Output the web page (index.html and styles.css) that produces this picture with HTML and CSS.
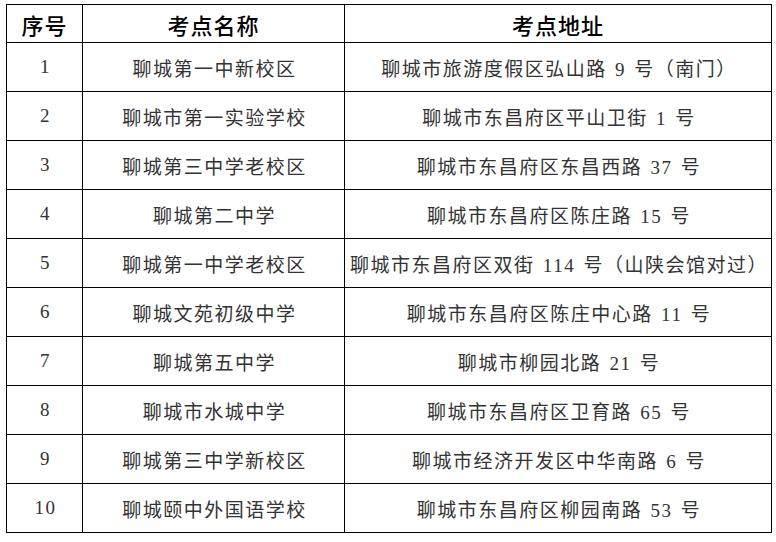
FILE: index.html
```html
<!DOCTYPE html>
<html lang="zh">
<head>
<meta charset="utf-8">
<title>考点名称</title>
<link rel="stylesheet" href="styles.css">
</head>
<body>
<div class="page">
<table class="exam">
<colgroup><col class="c-no"><col class="c-name"><col class="c-addr"></colgroup>
<thead>
<tr><th>序号</th><th>考点名称</th><th>考点地址</th></tr>
</thead>
<tbody>
<tr><td>1</td><td>聊城第一中新校区</td><td>聊城市旅游度假区弘山路 9 号（南门）</td></tr>
<tr><td>2</td><td>聊城市第一实验学校</td><td>聊城市东昌府区平山卫街 1 号</td></tr>
<tr><td>3</td><td>聊城第三中学老校区</td><td>聊城市东昌府区东昌西路 37 号</td></tr>
<tr><td>4</td><td>聊城第二中学</td><td>聊城市东昌府区陈庄路 15 号</td></tr>
<tr><td>5</td><td>聊城第一中学老校区</td><td>聊城市东昌府区双街 114 号（山陕会馆对过）</td></tr>
<tr><td>6</td><td>聊城文苑初级中学</td><td>聊城市东昌府区陈庄中心路 11 号</td></tr>
<tr><td>7</td><td>聊城第五中学</td><td>聊城市柳园北路 21 号</td></tr>
<tr><td>8</td><td>聊城市水城中学</td><td>聊城市东昌府区卫育路 65 号</td></tr>
<tr><td>9</td><td>聊城第三中学新校区</td><td>聊城市经济开发区中华南路 6 号</td></tr>
<tr><td>10</td><td>聊城颐中外国语学校</td><td>聊城市东昌府区柳园南路 53 号</td></tr>
</tbody>
</table>
</div>
</body>
</html>
```
FILE: styles.css
```css
html, body {
  margin: 0;
  padding: 0;
  background: #fff;
}
.page {
  padding: 4px 0 0 6px;
}
.exam {
  border-collapse: collapse;
  table-layout: fixed;
  width: 765px;
  color: #333;
}
.c-no { width: 76px; }
.c-name { width: 262px; }
.c-addr { width: 427px; }
.exam th, .exam td {
  border: 1px solid #000;
  text-align: center;
  vertical-align: middle;
  padding: 0;
  white-space: nowrap;
}
.exam th {
  height: 37px;
  font-family: "Noto Sans CJK SC", sans-serif;
  font-weight: 500;
  font-size: 22px;
  color: #000;
  letter-spacing: 1px;
}
.exam td {
  height: 48px;
  font-family: "Liberation Serif", "Noto Sans CJK SC", serif;
  font-size: 19px;
  font-weight: 400;
  letter-spacing: 1.5px;
  word-spacing: 2px;
  padding-left: 2px;
}
```
